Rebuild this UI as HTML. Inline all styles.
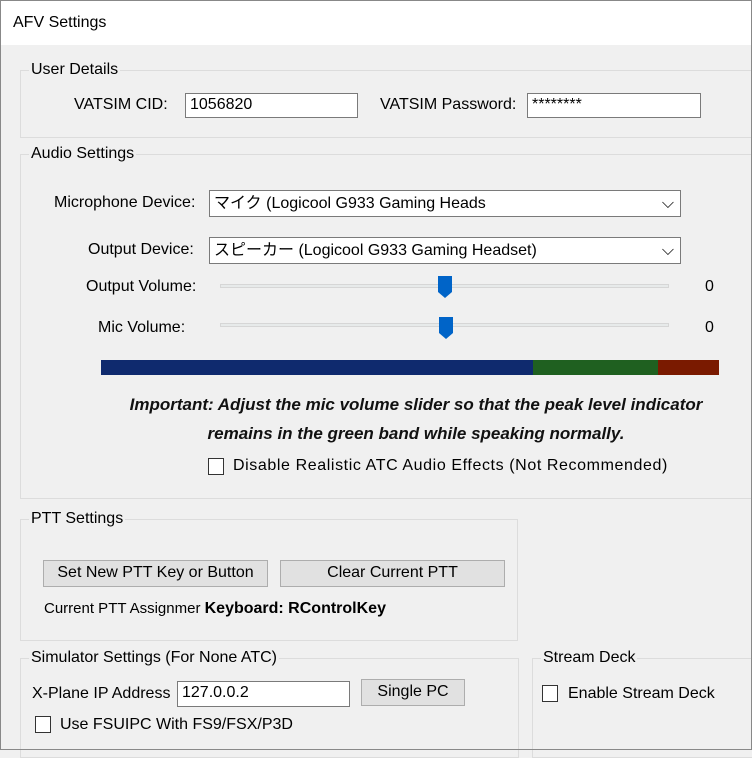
<!DOCTYPE html>
<html><head><meta charset="utf-8"><style>
*{margin:0;padding:0;box-sizing:border-box}
body{width:752px;height:750px;overflow:hidden;background:#f0f0f0;font-family:"Liberation Sans","Noto Sans CJK JP",sans-serif;font-size:16px;color:#000;position:relative}
.a{position:absolute;white-space:nowrap}
.win{position:absolute;left:0;top:0;width:752px;height:750px;border:1px solid #888;pointer-events:none}
.title{position:absolute;left:0;top:0;width:752px;height:45px;background:#fff}
.grp{position:absolute;border:1px solid #dcdcdc}
.lbl{position:absolute;background:#f0f0f0;padding:0 2px;top:-10px;left:8px;line-height:18px}
.inp{position:absolute;background:#fff;border:1px solid #7a7a7a;padding-left:4px;line-height:22px}
.btn{position:absolute;background:#e1e1e1;border:1px solid #adadad;text-align:center;line-height:24px}
.cb{position:absolute;width:16px;height:17px;background:#fff;border:1px solid #333}
.track{position:absolute;height:4px;background:#e7eaea;border:1px solid #d6d6d6}
.thumb{position:absolute;width:14px;height:22px}
</style></head><body>
<div class="title"></div>
<div class="a" style="left:13px;top:14px;font-size:16px">AFV Settings</div>

<div class="grp" style="left:20px;top:70px;width:740px;height:68px"><div class="lbl">User Details</div></div>
<div class="a" style="left:74px;top:96px">VATSIM CID:</div>
<div class="inp" style="left:185px;top:93px;width:173px;height:25px">1056820</div>
<div class="a" style="left:380px;top:96px">VATSIM Password:</div>
<div class="inp" style="left:527px;top:93px;width:174px;height:25px">********</div>

<div class="grp" style="left:20px;top:154px;width:740px;height:345px"><div class="lbl">Audio Settings</div></div>
<div class="a" style="left:54px;top:194px">Microphone Device:</div>
<div class="inp" style="left:209px;top:190px;width:472px;height:27px;line-height:25px">マイク (Logicool G933 Gaming Heads<span style="position:absolute;right:6px;top:0">⌵</span></div>
<div class="a" style="left:88px;top:241px">Output Device:</div>
<div class="inp" style="left:209px;top:237px;width:472px;height:27px;line-height:25px">スピーカー (Logicool G933 Gaming Headset)<span style="position:absolute;right:6px;top:0">⌵</span></div>
<div class="a" style="left:86px;top:278px">Output Volume:</div>
<div class="track" style="left:220px;top:284px;width:449px"></div>
<svg class="thumb" style="left:438px;top:276px" viewBox="0 0 14 22"><path d="M0 0H14V16L7 22L0 16Z" fill="#0064c8"/></svg>
<div class="a" style="left:705px;top:278px">0</div>
<div class="a" style="left:98px;top:319px">Mic Volume:</div>
<div class="track" style="left:220px;top:323px;width:449px"></div>
<svg class="thumb" style="left:439px;top:316px;height:24px" viewBox="0 0 14 22"><path d="M0 0H14V16L7 22L0 16Z" fill="#0064c8"/></svg>
<div class="a" style="left:705px;top:319px">0</div>
<div class="a" style="left:101px;top:360px;width:432px;height:15px;background:#0f2a6e"></div>
<div class="a" style="left:533px;top:360px;width:125px;height:15px;background:#1f6020"></div>
<div class="a" style="left:658px;top:360px;width:61px;height:15px;background:#7a1a00"></div>
<div class="a" style="left:0;width:832px;top:390px;text-align:center;font-weight:bold;font-style:italic;font-size:17px;line-height:29px;color:#111">Important: Adjust the mic volume slider so that the peak level indicator<br>remains in the green band while speaking normally.</div>
<div class="cb" style="left:208px;top:458px"></div>
<div class="a" style="left:233px;top:457px;letter-spacing:0.6px">Disable Realistic ATC Audio Effects (Not Recommended)</div>

<div class="grp" style="left:20px;top:519px;width:498px;height:122px"><div class="lbl">PTT Settings</div></div>
<div class="btn" style="left:43px;top:560px;width:225px;height:27px">Set New PTT Key or Button</div>
<div class="btn" style="left:280px;top:560px;width:225px;height:27px">Clear Current PTT</div>
<div class="a" style="left:44px;top:600px;font-size:15px">Current PTT Assignmer <b style="font-size:16px">Keyboard: RControlKey</b></div>

<div class="grp" style="left:20px;top:658px;width:499px;height:100px"><div class="lbl">Simulator Settings (For None ATC)</div></div>
<div class="a" style="left:32px;top:685px">X-Plane IP Address</div>
<div class="inp" style="left:177px;top:681px;width:173px;height:26px">127.0.0.2</div>
<div class="btn" style="left:361px;top:679px;width:104px;height:27px">Single PC</div>
<div class="cb" style="left:35px;top:716px"></div>
<div class="a" style="left:60px;top:716px">Use FSUIPC With FS9/FSX/P3D</div>

<div class="grp" style="left:532px;top:658px;width:240px;height:100px"><div class="lbl">Stream Deck</div></div>
<div class="cb" style="left:542px;top:685px"></div>
<div class="a" style="left:568px;top:685px">Enable Stream Deck</div>
<div class="win"></div>
</body></html>
